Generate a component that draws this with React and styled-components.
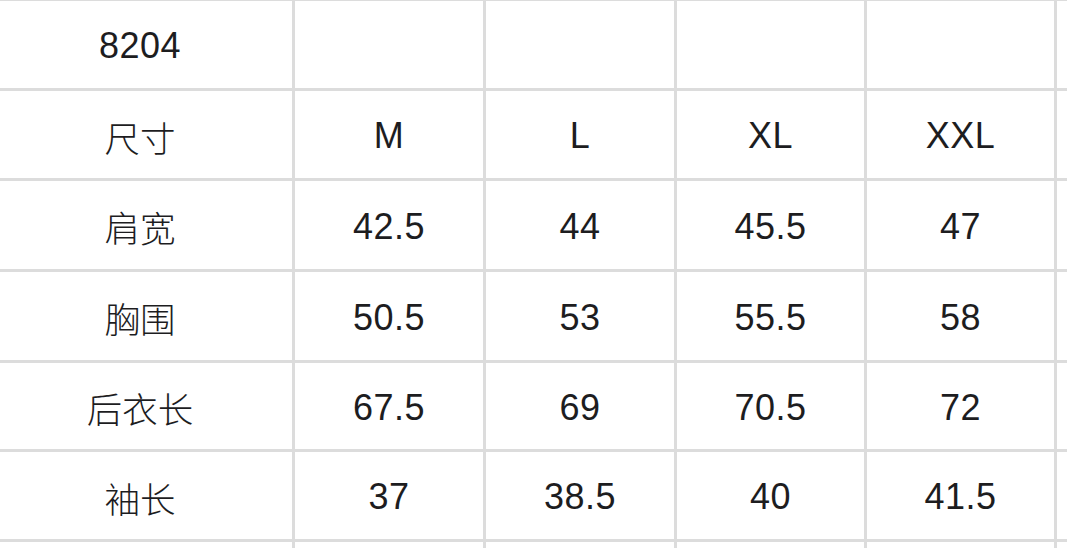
import React from "react";
import styled, { createGlobalStyle } from "styled-components";

const GlobalStyle = createGlobalStyle`
  html, body {
    margin: 0;
    padding: 0;
    background: #ffffff;
  }
  body {
    font-family: "Liberation Sans", "Noto Sans CJK SC", sans-serif;
    overflow: hidden;
  }
`;

// 尺码表 数据
const rows = [
  ["8204", "", "", "", ""],
  ["尺寸", "M", "L", "XL", "XXL"],
  ["肩宽", "42.5", "44", "45.5", "47"],
  ["胸围", "50.5", "53", "55.5", "58"],
  ["后衣长", "67.5", "69", "70.5", "72"],
  ["袖长", "37", "38.5", "40", "41.5"],
  ["", "", "", "", ""],
];

const App = () => {
  return (
    <>
      <GlobalStyle />
      <StPage>
        <StSheet>
          {rows.map((row, r) => (
            <React.Fragment key={r}>
              {row.map((text, c) => (
                <StCell key={c} $label={c === 0 && r > 0}>{text}</StCell>
              ))}
              <StCell />
            </React.Fragment>
          ))}
        </StSheet>
      </StPage>
    </>
  );
};

/* STYLED-COMPONENTS */

const StPage = styled.div`
  width: 1067px;
  height: 548px;
  overflow: hidden;
  background: #ffffff;
`;

const StSheet = styled.div`
  display: grid;
  grid-template-columns: 304px 188px 188px 187px 187px 120px;
  grid-template-rows: 87px 87px 88px 88px 86px 87px 87px;
  gap: 3px;
  padding-top: 3px;
  margin-top: -2px;
  margin-left: -12px;
  width: max-content;
  background: #dcdcdc;
`;

const StCell = styled.div`
  display: flex;
  align-items: center;
  justify-content: center;
  padding-top: 3px;
  background: #ffffff;
  color: #1d1d1f;
  font-family: "Liberation Sans", "Noto Sans CJK SC", sans-serif;
  font-size: ${(p) => (p.$label ? "35.5px" : "36px")};
  font-weight: ${(p) => (p.$label ? 300 : 400)};
  letter-spacing: ${(p) => (p.$label ? "0" : "0.5px")};
`;

export default App;
